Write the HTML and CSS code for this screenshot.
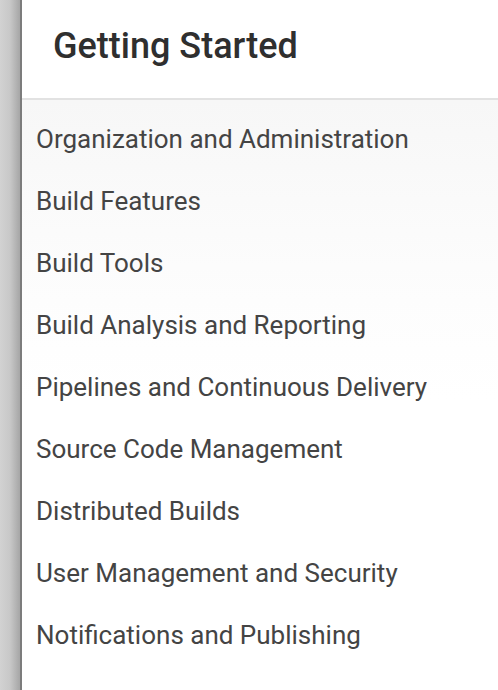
FILE: index.html
```html
<!DOCTYPE html>
<html>
<head>
<meta charset="utf-8">
<link rel="stylesheet" href="styles.css">
</head>
<body>
<div class="page">
  <div class="edge"></div>
  <div class="panel">
    <header class="head"><h1 class="title">Getting Started</h1></header>
    <ul class="list">
      <li class="item">Organization and Administration</li>
      <li class="item">Build Features</li>
      <li class="item">Build Tools</li>
      <li class="item">Build Analysis and Reporting</li>
      <li class="item">Pipelines and Continuous Delivery</li>
      <li class="item">Source Code Management</li>
      <li class="item">Distributed Builds</li>
      <li class="item">User Management and Security</li>
      <li class="item">Notifications and Publishing</li>
    </ul>
  </div>
</div>
</body>
</html>
```
FILE: styles.css
```css
html, body { margin: 0; padding: 0; }
body { width: 498px; height: 690px; overflow: hidden; font-family: Roboto, "Liberation Sans", sans-serif; background: #fff; }
.page { display: flex; height: 690px; }
.edge { width: 20px; flex: none; background: linear-gradient(to right, #d2d2d2 0%, #c8c8c8 50%, #a6a6a6 100%); border-right: 2px solid #7c7c7c; }
.panel { flex: 1; display: flex; flex-direction: column; background: #fff; }
.head { border-bottom: 2px solid #e2e2e2; display: flex; align-items: center; padding: 0 0 6px 31px; box-sizing: border-box; height: 100px; }
.title { margin: 0; font-size: 36px; font-weight: 500; color: #2f2f2f; letter-spacing: 0; }
.list { list-style: none; margin: 0; padding: 8px 0 0 14px; flex: 1; background: linear-gradient(to bottom, #f7f7f7 0px, #fdfdfd 200px, #fff 300px); }
.item { height: 62px; line-height: 62px; font-size: 26px; color: #444; }
```
